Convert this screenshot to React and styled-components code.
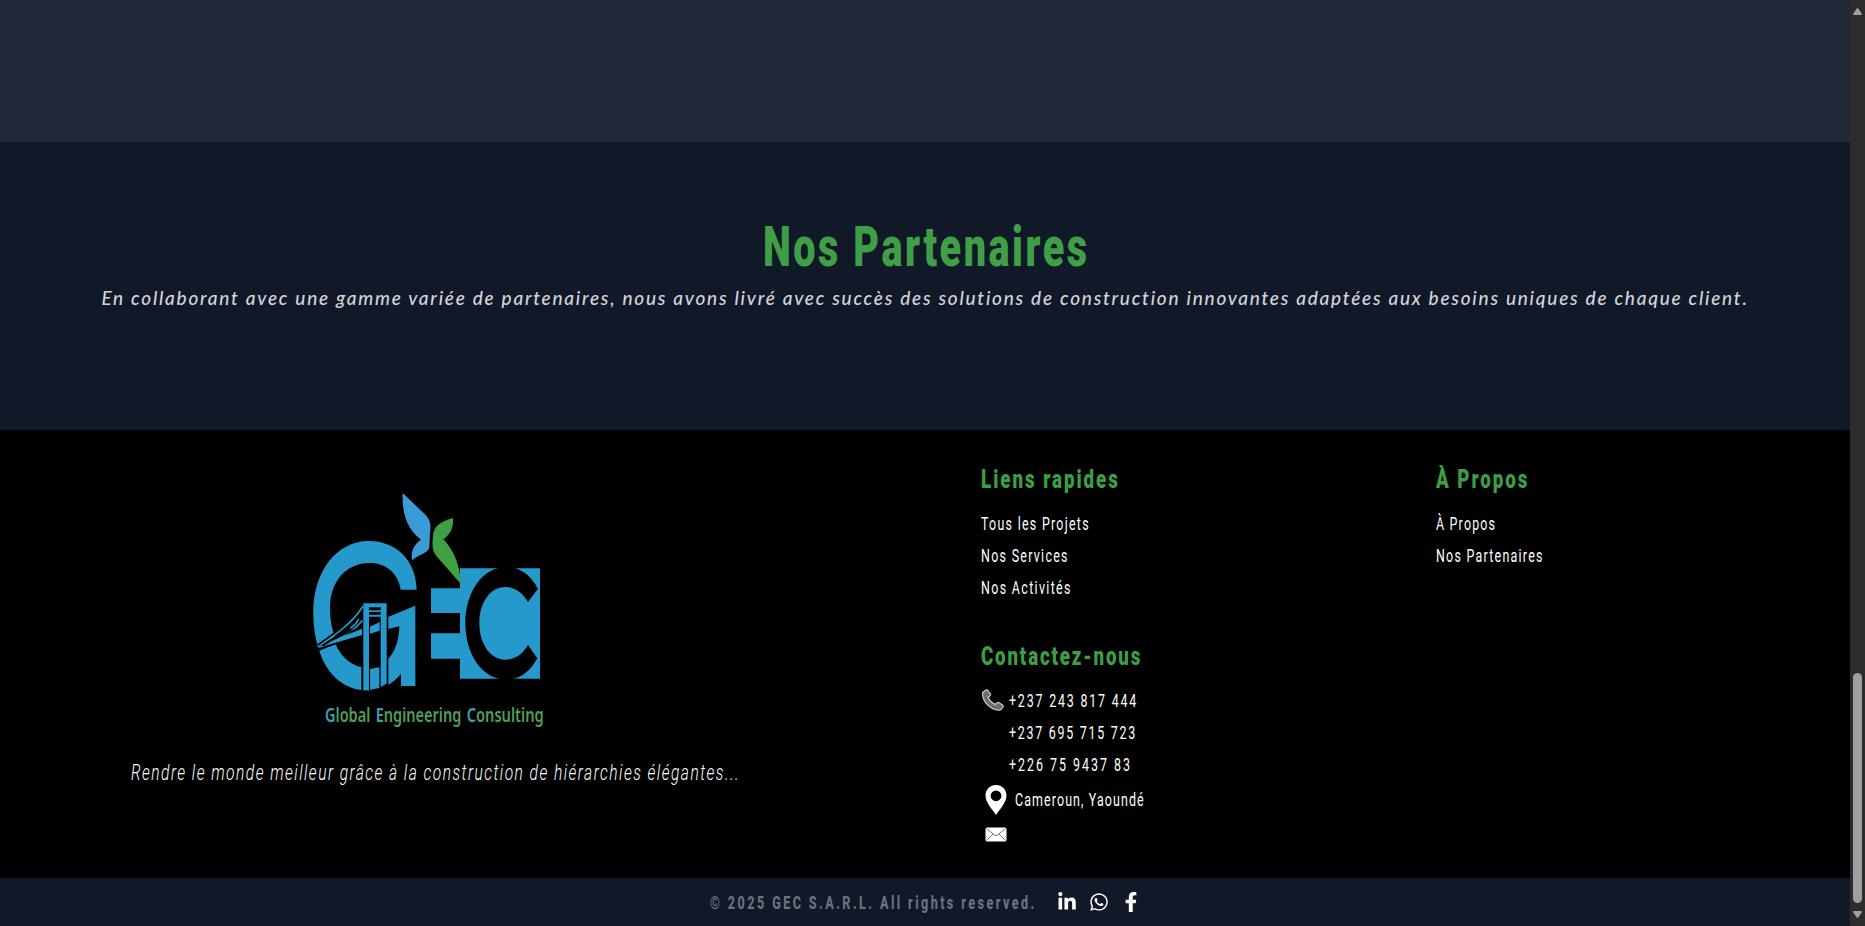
import React from "react";
import styled, { createGlobalStyle } from "styled-components";
import { FaLinkedinIn, FaWhatsapp, FaFacebookF } from "react-icons/fa";

const GlobalStyle = createGlobalStyle`
  * { box-sizing: border-box; }
  body { margin: 0; background: #000; overflow: hidden; font-family: Roboto, sans-serif; }
  h1, h2, p, ul { margin: 0; padding: 0; }
  ul { list-style: none; }
`;

const Shell = styled.div`
  display: flex;
  width: 100%;
  height: 926px;
`;

const Page = styled.main`
  flex: 1;
  min-width: 0;
  display: flex;
  flex-direction: column;
`;

const Spacer = styled.div`
  height: 142px;
  background: #1f2937;
`;

/* Condensed display type: $w is the set width, $sp the tracking before squeezing. */
const Condensed = styled.span`
  display: block;
  width: ${(p) => p.$w}px;
  white-space: nowrap;
  letter-spacing: ${(p) => p.$sp}px;
  transform: scaleX(${(p) => p.$x || 0.68});
  transform-origin: left center;
`;

const Partners = styled.section`
  height: 288px;
  padding-top: 69px;
  background: #111827;
  display: flex;
  flex-direction: column;
  align-items: center;
`;

const Title = styled.h1`
  color: #3f9f46;
  font-size: 55px;
  font-weight: 900;
  line-height: 72px;
`;

const Tagline = styled.p`
  color: #d1d5db;
  font: italic 500 19px/30px Lato, sans-serif;
  letter-spacing: 1.75px;
  white-space: nowrap;
`;

const Footer = styled.footer`
  height: 448px;
  padding-top: 33px;
  background: #000;
  color: #fff;
  display: grid;
  grid-template-columns: 981px 455px 1fr;
`;

const Brand = styled.div`
  padding: 17px 0 0 131px;
  display: flex;
  flex-direction: column;
  gap: 18px;
`;

const Logo = styled.svg`
  width: 280px;
  height: 260px;
  margin-left: 159px;
  display: block;
`;

const Slogan = styled.p`
  font-size: 22.9px;
  font-weight: 350;
  font-style: italic;
  line-height: 30px;
`;

const Column = styled.div`
  display: flex;
  flex-direction: column;
  gap: 37px;
`;

const Heading = styled.h2`
  color: #3c9f45;
  font-size: 25px;
  font-weight: 900;
  line-height: 34px;
  margin-bottom: 10px;
`;

const Item = styled.li`
  height: ${(p) => p.$h || 32}px;
  padding-left: ${(p) => p.$pad || 0}px;
  display: flex;
  align-items: center;
  gap: ${(p) => p.$gap || 0}px;
  font-size: 18.3px;
  font-weight: 380;
`;

const Glyph = styled.svg`
  display: block;
  flex: none;
  width: ${(p) => p.$w}px;
  height: ${(p) => p.$h}px;
`;

const Legal = styled.div`
  height: 48px;
  padding-left: 710px;
  background: #111827;
  color: #6b7280;
  font-size: 18px;
  font-weight: 800;
  display: flex;
  align-items: center;
`;

const Socials = styled.div`
  display: flex;
  align-items: center;
  gap: 12px;
  margin-left: 20px;
  color: #fff;
  svg { display: block; width: 20px; height: 20px; }
`;

const Scrollbar = styled.aside`
  width: 15px;
  padding: 8px 3px;
  background: #2c2c2c;
  display: flex;
  flex-direction: column;
  justify-content: space-between;
`;

const Thumb = styled.div`
  height: 230px;
  margin: 658px 0 8px;
  border-radius: 5px;
  background: #9f9f9f;
`;

const words = [
  ["G", "lobal", 105, 136],
  ["E", "ngineering", 257, 257],
  ["C", "onsulting", 530, 231],
];

function LogoMark() {
  return (
    <Logo viewBox="0 0 840 780" role="img" aria-label="GEC">
      <g fill="#2699cc">
        <path fillRule="evenodd" d="M70 395C70 275 140 183 236 183C318 183 378 240 380 329H332C325 281 290 249 239 249C166 249 120 306 120 385C120 418 125 446 134 470L84 500C74 469 70 430 70 395Z" />
        <path d="M88 512L137 492C153 533 190 563 232 563C290 563 326 515 328 439L294 447V411L376 377V618H333V581C308 612 275 631 232 631C166 631 111 587 88 512Z" />
        <path d="M423 325H510V265H750V596H510V536H423V460H510V399H423Z" />
      </g>
      <path fill="#000" d="M744 326C721 284 689 261 648 261C578 261 526 336 526 430C526 524 578 599 648 599C688 599 720 576 742 535L714 495C697 524 674 539 645 539C601 539 568 492 568 430C568 368 601 321 645 321C674 321 697 336 714 366Z" />
      <path fill="#3a9bd7" d="M338 39L407 105C420 119 424 134 420 160L418 202C414 222 386 222 367 241C360 222 371 192 393 179C355 151 335 105 338 39Z" />
      <path fill="#3fa043" d="M489 114C492 142 480 164 460 178C489 207 512 257 512 311L439 228C425 211 427 188 429 169C431 139 447 126 489 114Z" />
      <path fill="#000" d="M214 370H295V631H214Z" />
      <g fill="#2699cc">
        <path d="M220 370H290V382H220ZM220 382H237V631H220ZM272 382H290V611L272 621ZM237 391H272V396H237ZM237 404H272V410H237Z" />
        <path d="M240 440L269 426V452L240 461ZM240 567L268 562V624L240 629Z" />
        <path d="M128 482L216 446V466L90 502Z" />
      </g>
      <g fill="none" stroke="#2699cc" strokeWidth="5">
        <path d="M83 500C145 459 190 426 219 378" />
        <path d="M86 503C150 479 196 451 217 421M181 445Q198 435 206 416" />
      </g>
      <path fill="none" stroke="#000" strokeWidth="5" d="M83 495C145 453 183 422 214 376M98 497C155 462 195 430 216 396M84 507L216 468M126 478L216 441" />
      <g transform="scale(.72 1)" fontFamily="'Noto Sans', sans-serif" fontWeight="600" fontSize="58" fill="#4f9f58">
        {words.map(([cap, rest, x, w]) => (
          <text key={cap} x={x / 0.72} y="725" textLength={w / 0.72} lengthAdjust="spacingAndGlyphs">
            <tspan fill="#3a9fb5">{cap}</tspan>{rest}
          </text>
        ))}
      </g>
    </Logo>
  );
}

const links = [
  ["Tous les Projets", 106, 1.88],
  ["Nos Services", 85, 1.9],
  ["Nos Activités", 88, 1.98],
];
const about = [
  ["À Propos", 58, 1.75],
  ["Nos Partenaires", 105, 1.84],
];

function LinkGroup({ title, w, sp, items }) {
  return (
    <section>
      <Heading><Condensed $w={w} $sp={sp} $x={0.75}>{title}</Condensed></Heading>
      <ul>
        {items.map(([label, width, spacing]) => (
          <Item key={label}><Condensed $w={width} $sp={spacing}>{label}</Condensed></Item>
        ))}
      </ul>
    </section>
  );
}

function Contact() {
  return (
    <section>
      <Heading><Condensed $w={160} $sp={2.42} $x={0.75}>Contactez-nous</Condensed></Heading>
      <ul>
        <Item $pad={1} $gap={5}>
          <Glyph $w={22} $h={22} viewBox="0 0 22 22">
            <path d="M1 3.2L4.2.8Q5.3.4 6 1.5L8.4 5Q8.9 6.1 8 6.9L6.2 8.3Q8 13 13.2 15.5L15.1 13.8Q16 13 17 13.6L20.8 16.2Q21.7 17 21 18L19.2 20.4Q18.2 21.4 16.6 21.3C9 20.8 1 13.5.5 5Q.4 3.9 1 3.2Z" fill="#6d6d6d" stroke="#d4d4d4" strokeWidth="1.1" />
          </Glyph>
          <Condensed $w={127} $sp={2.66}>+237 243 817 444</Condensed>
        </Item>
        <Item $pad={28}><Condensed $w={126} $sp={2.56}>+237 695 715 723</Condensed></Item>
        <Item $pad={28}><Condensed $w={121} $sp={2.93}>+226 75 9437 83</Condensed></Item>
        <Item $h={39} $pad={4} $gap={8}>
          <Glyph $w={22} $h={30} viewBox="0 0 22 30">
            <path fill="#fff" fillRule="evenodd" d="M11 0C17 0 21.5 4.6 21.5 10.3C21.5 17 16 23 11 30C6 23 .5 17 .5 10.3C.5 4.6 5 0 11 0ZM11 5.4A5.4 5.4 0 1 0 11 16.2A5.4 5.4 0 1 0 11 5.4Z" />
          </Glyph>
          <Condensed $w={129} $sp={1.62}>Cameroun, Yaoundé</Condensed>
        </Item>
        <Item $h={30} $pad={4}>
          <Glyph $w={22} $h={15} viewBox="0 0 22 15">
            <rect x=".5" y=".5" width="21" height="14" rx="1.5" fill="#fff" />
            <path d="M1.5 1.5L9.5 8Q11 9 12.5 8L20.5 1.5M1.5 13.5L8 7M20.5 13.5L14 7" fill="none" stroke="#555" strokeWidth=".8" />
          </Glyph>
        </Item>
      </ul>
    </section>
  );
}

export default function App() {
  return (
    <Shell>
      <GlobalStyle />
      <Page>
        <Spacer />
        <Partners>
          <Title><Condensed $w={325} $sp={3.5} $x={0.72}>Nos Partenaires</Condensed></Title>
          <Tagline>
            En collaborant avec une gamme variée de partenaires, nous avons livré avec succès des solutions de construction innovantes adaptées aux besoins uniques de chaque client.
          </Tagline>
        </Partners>
        <Footer>
          <Brand>
            <LogoMark />
            <Slogan>
              <Condensed $w={607} $sp={2.16}>Rendre le monde meilleur grâce à la construction de hiérarchies élégantes...</Condensed>
            </Slogan>
          </Brand>
          <Column>
            <LinkGroup title="Liens rapides" w={138} sp={2.62} items={links} />
            <Contact />
          </Column>
          <Column>
            <LinkGroup title="À Propos" w={92} sp={2.6} items={about} />
          </Column>
        </Footer>
        <Legal>
          <Condensed $w={327} $sp={3.45} $x={0.7}>© 2025 GEC S.A.R.L. All rights reserved.</Condensed>
          <Socials><FaLinkedinIn /><FaWhatsapp /><FaFacebookF /></Socials>
        </Legal>
      </Page>
      <Scrollbar>
        <Glyph $w={9} $h={7} viewBox="0 0 9 7"><path d="M4.5 0Q5 0 5.5.8L9 6Q9 7 8 7H1Q0 7 0 6L3.5.8Q4 0 4.5 0Z" fill="#9f9f9f" /></Glyph>
        <Thumb />
        <Glyph $w={9} $h={7} viewBox="0 0 9 7"><path d="M4.5 7Q5 7 5.5 6.2L9 1Q9 0 8 0H1Q0 0 0 1L3.5 6.2Q4 7 4.5 7Z" fill="#9f9f9f" /></Glyph>
      </Scrollbar>
    </Shell>
  );
}
